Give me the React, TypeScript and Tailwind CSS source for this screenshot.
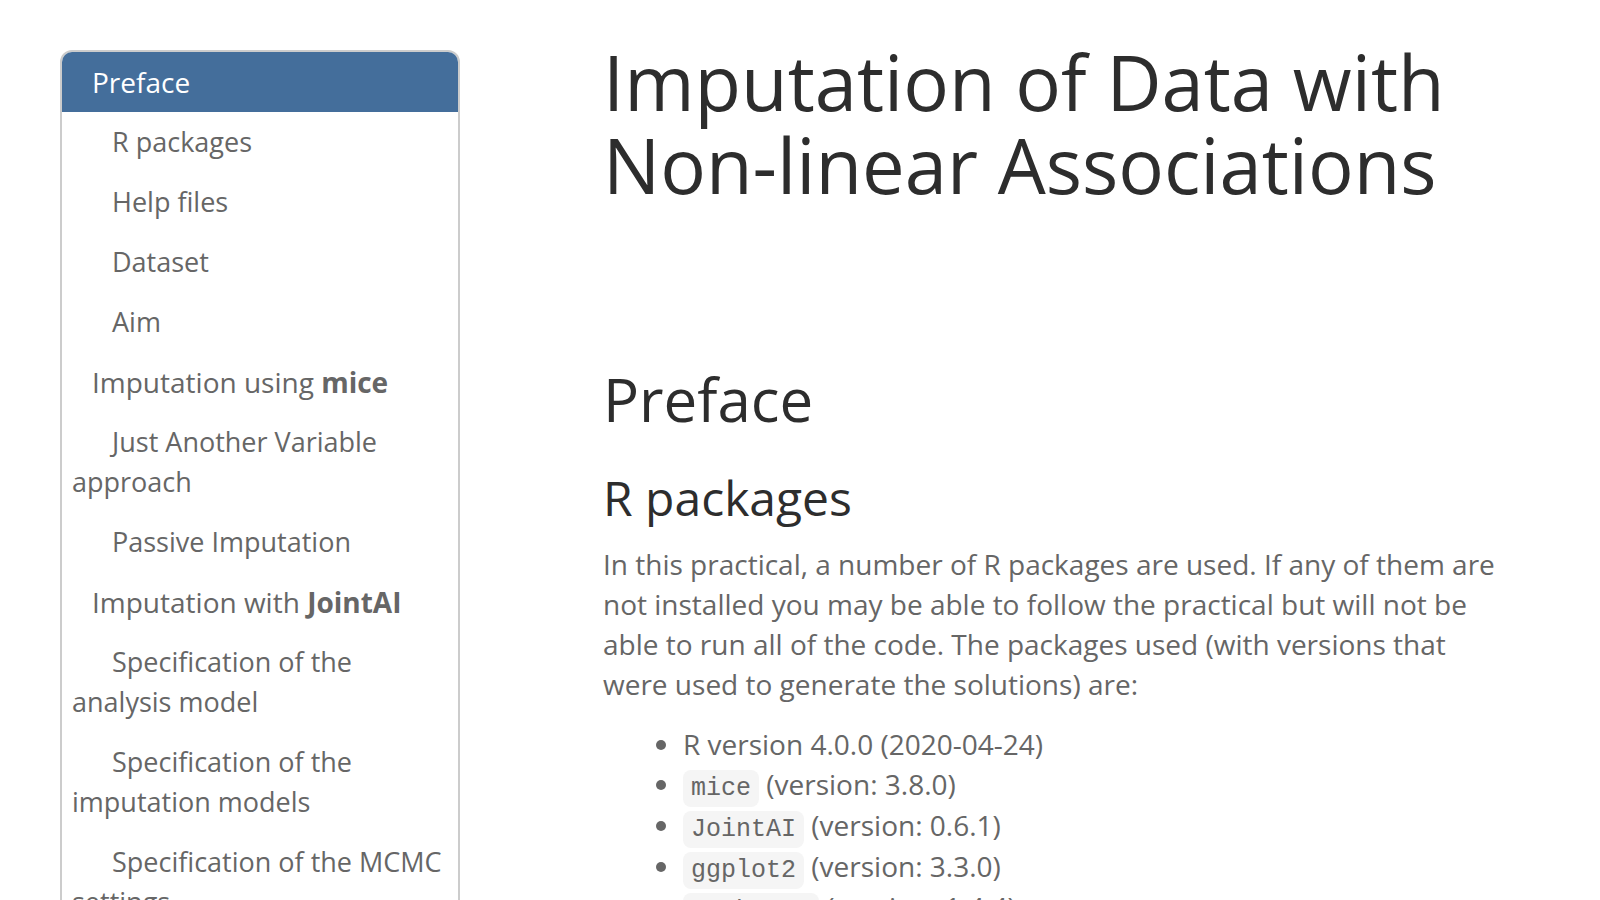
import type { ReactNode } from "react";

type TocEntry = { id: string; label: ReactNode; level: 1 | 2 };

const toc: TocEntry[] = [
  { id: "preface", label: "Preface", level: 1 },
  { id: "r-packages", label: "R packages", level: 2 },
  { id: "help-files", label: "Help files", level: 2 },
  { id: "dataset", label: "Dataset", level: 2 },
  { id: "aim", label: "Aim", level: 2 },
  { id: "imputation-mice", label: <>Imputation using <strong>mice</strong></>, level: 1 },
  { id: "jav", label: "Just Another Variable approach", level: 2 },
  { id: "passive", label: "Passive Imputation", level: 2 },
  { id: "imputation-jointai", label: <>Imputation with <strong>JointAI</strong></>, level: 1 },
  { id: "analysis-model", label: "Specification of the analysis model", level: 2 },
  { id: "imputation-models", label: "Specification of the imputation models", level: 2 },
  { id: "mcmc", label: "Specification of the MCMC settings", level: 2 },
];

const packages = [
  { name: "mice", version: "3.8.0" },
  { name: "JointAI", version: "0.6.1" },
  { name: "ggplot2", version: "3.3.0" },
  { name: "reshape2", version: "1.4.4" },
];

function Toc({ active }: { active: string }) {
  return (
    <nav
      aria-label="Table of contents"
      className="mt-[50px] ml-[60px] w-1/4 shrink-0 overflow-hidden rounded-xl border-2 border-[#cccccc]"
    >
      <ul>
        {toc.map((entry) => (
          <li key={entry.id}>
            <a
              href={`#${entry.id}`}
              className={`block p-[10px] ${entry.level === 1 ? "indent-[20px]" : "indent-[40px] text-[27px]"} ${
                entry.id === active ? "bg-[#446e9b] text-white" : "text-[#666666]"
              }`}
            >
              {entry.label}
            </a>
          </li>
        ))}
      </ul>
    </nav>
  );
}

export default function App() {
  return (
    <div className="flex min-h-screen items-start bg-white font-['Open_Sans',sans-serif] text-[28px] leading-[40px] text-[#666666]">
      <Toc active="preface" />
      <main className="min-w-0 flex-1 pt-[40px] pr-[100px] pl-[143px]">
        <h1 className="text-[76px] leading-[83px] text-[#2d2d2d]">
          Imputation of Data with Non-linear Associations
        </h1>
        <section id="preface" className="mt-[160px]">
          <h1 className="text-[60px] leading-[66px] text-[#2d2d2d]">Preface</h1>
          <section id="r-packages" className="mt-[39px]">
            <h2 className="text-[48px] leading-[53px] text-[#2d2d2d]">R packages</h2>
            <p className="my-[20px]">
              In this practical, a number of R packages are used. If any of them are not installed you may be
              able to follow the practical but will not be able to run all of the code. The packages used
              (with versions that were used to generate the solutions) are:
            </p>
            <ul className="list-disc pl-[80px]">
              <li>R version 4.0.0 (2020-04-24)</li>
              {packages.map((pkg) => (
                <li key={pkg.name} className="leading-[41px]">
                  <code className="rounded-lg bg-[#f5f5f5] px-[8px] py-[4px] font-['Courier_New','Liberation_Mono',monospace] text-[25px] leading-none">
                    {pkg.name}
                  </code>{" "}
                  (version: {pkg.version})
                </li>
              ))}
            </ul>
          </section>
        </section>
      </main>
    </div>
  );
}
